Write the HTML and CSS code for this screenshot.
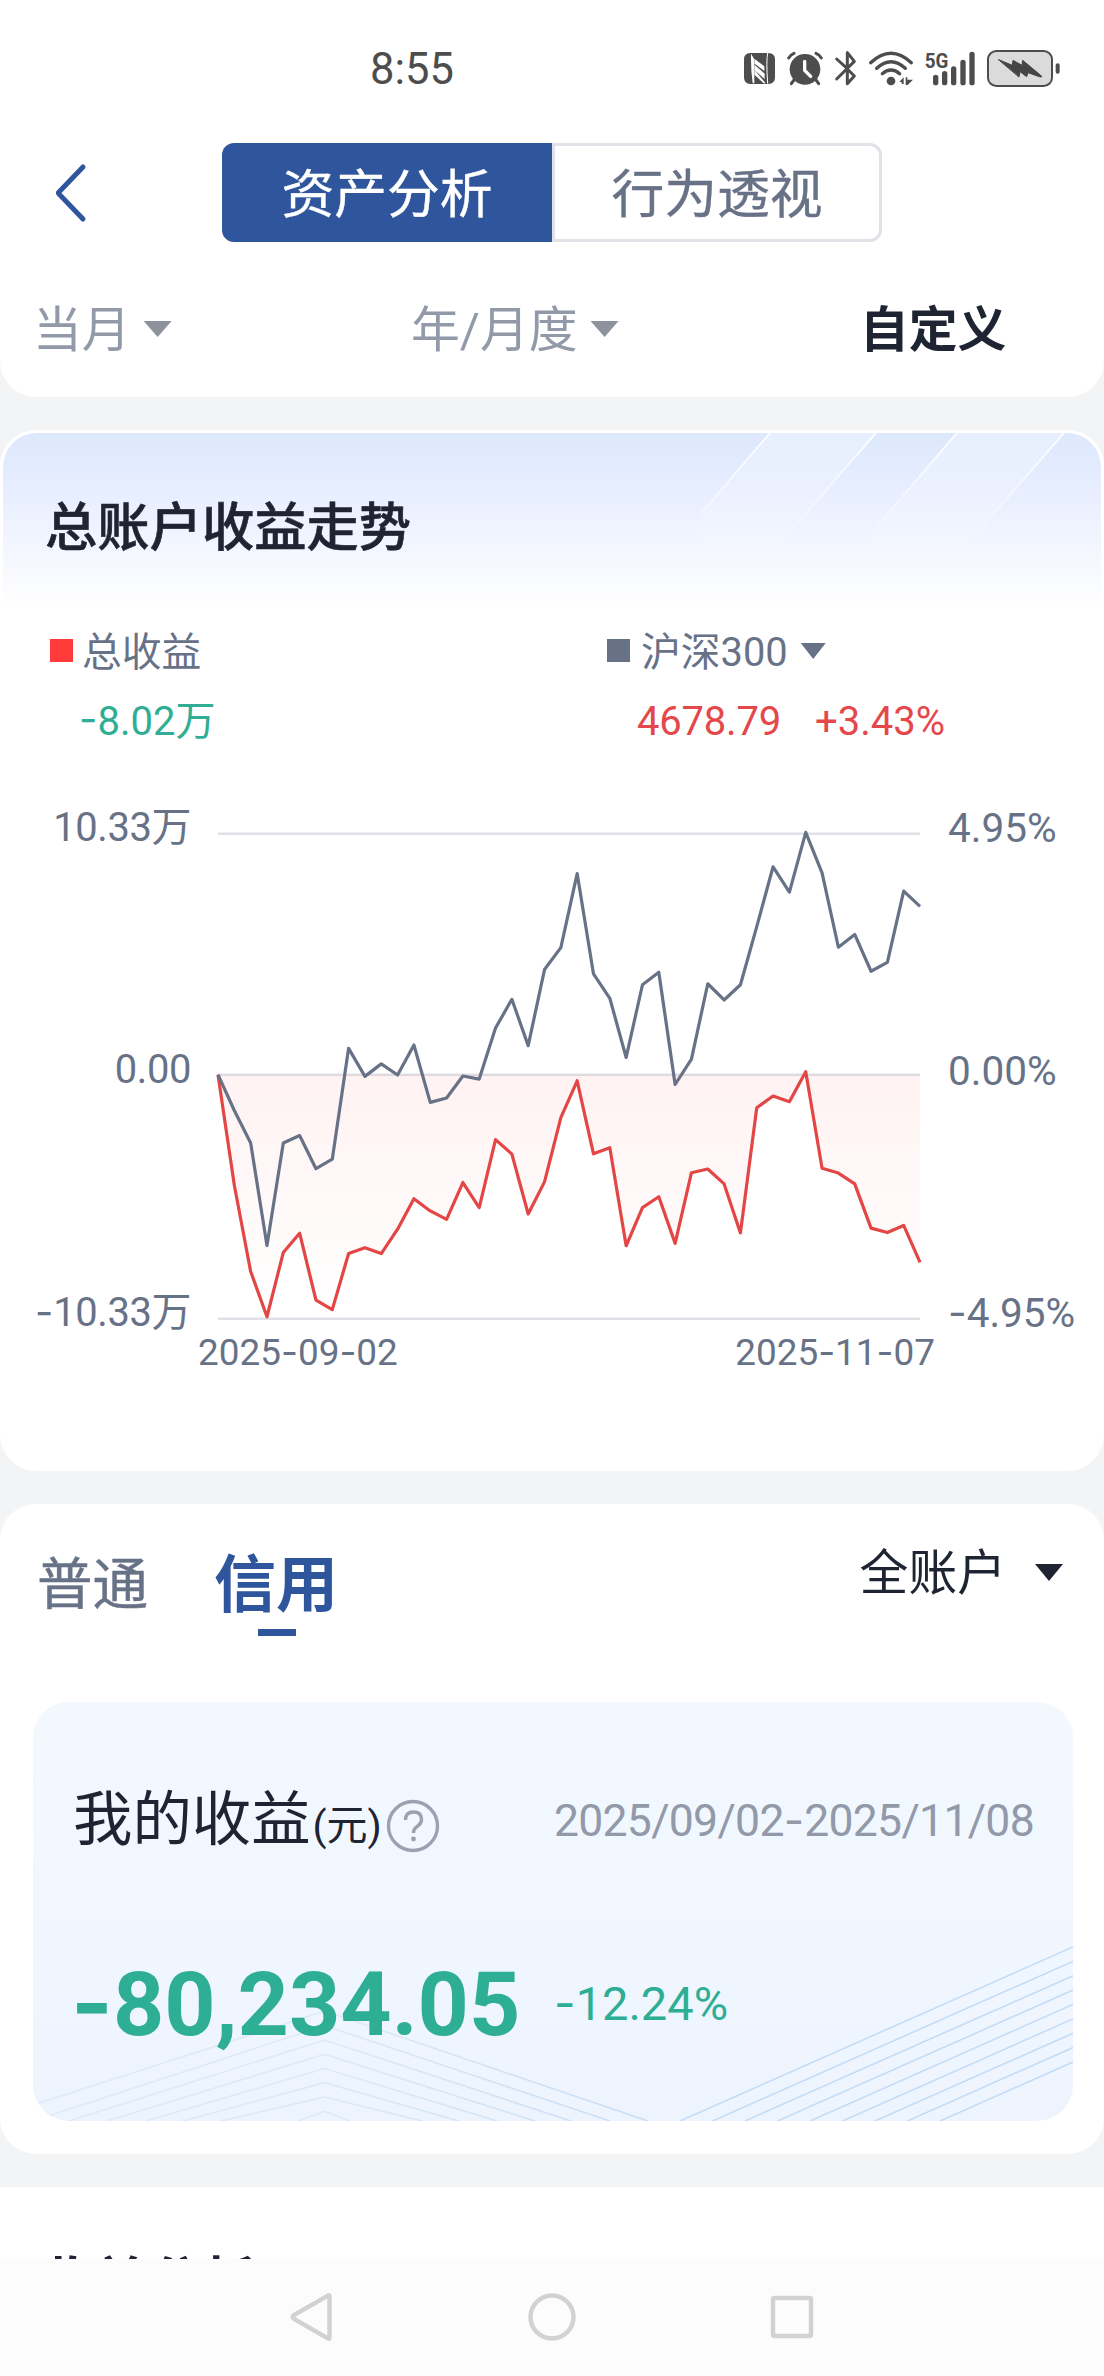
FILE: index.html
```
<!DOCTYPE html>
<html lang="zh-CN">
<head>
<meta charset="utf-8">
<title>资产分析</title>
<link rel="stylesheet" href="styles.css">
</head>
<body>
<div class="screen">
  <header class="header">
    <div class="status">
      <span class="clock">8:55</span>
      <svg class="status-icons" viewBox="0 0 1152 225" fill="none" stroke="#4d4d4d" stroke-linecap="round" stroke-linejoin="round">
        <!-- nfc -->
        <path d="M91 66h54q20 0 20 20v53q0 20-20 20H91q-19 0-19-20V86q0-20 19-20z" fill="#4d4d4d" stroke="none"/>
        <path d="M143 67q-5 20 0 90" stroke="#fff" stroke-width="3"/>
        <path d="M93 68l10 17v72h-5q-6-40-5-89zM104 84l29 22v14l-29-22zM104 102l30 26v16l-30-26zM104 118l33 39h-6l-27-25z" fill="#fff" stroke="none"/>
        <!-- alarm -->
        <circle cx="255" cy="115" r="46" fill="#4d4d4d" stroke="none"/>
        <path d="M206 81q6-10 16-14M288 67q10 4 16 14M222 147l-8 11M288 147l8 11" stroke-width="9"/>
        <path d="M254 91v27l18 18" stroke="#fff" stroke-width="10"/>
        <!-- bluetooth -->
        <path d="M350 84l28 25M350 144l53-53-21-26v43M382 124v34l21-23-18-18" stroke-width="9"/>
        <!-- wifi -->
        <path d="M452 95q61-57 122 0M470 112q43-40 86 0M487 128q26-22 52 0" stroke-width="10"/>
        <circle cx="513" cy="150" r="13" fill="#4d4d4d" stroke="none"/>
        <path d="M538 153l13-14v20h-6v-6zM557 139h5v7h17l-16 16h-6z" fill="#4d4d4d" stroke="none"/>
        <!-- signal -->
        <text x="614" y="110" class="net" textLength="71" lengthAdjust="spacingAndGlyphs">5G</text>
        <path d="M647 139v16M674 128v27M701 114v41M729 94v61M756 70v85" stroke-width="16"/>
        <!-- battery -->
        <rect x="804" y="60" width="192" height="105" rx="25" fill="#dbdbdb" stroke-width="6"/>
        <path d="M836 86l41 17 2-15 27 15 2-15 54 45q8 7-4 4l-34-12-4 12-20-15-3 15z" fill="#444" stroke="#444" stroke-width="3"/>
        <rect x="1007" y="97" width="12" height="31" rx="6" fill="#4d4d4d" stroke="none"/>
      </svg>
    </div>
    <div class="topbar">
      <svg class="back" viewBox="0 0 34 60" fill="none" stroke="#2f569d" stroke-width="5" stroke-linecap="round" stroke-linejoin="round"><path d="M29 4L5 29q-1 1 0 2L29 56"/></svg>
      <div class="segments">
        <span class="segment segment-on">资产分析</span>
        <span class="segment segment-off">行为透视</span>
      </div>
    </div>
    <nav class="filters">
      <span class="filter filter-month">当月<i class="caret"></i></span>
      <span class="filter filter-year">年/月度<i class="caret"></i></span>
      <span class="filter filter-custom">自定义</span>
    </nav>
  </header>

  <section class="card trend">
    <div class="trend-head">
      <svg class="stripes" viewBox="0 0 400 172">
        <defs>
          <linearGradient id="band" x1="0" y1="0" x2="0" y2="1"><stop offset="0" stop-color="#fff" stop-opacity=".3"/><stop offset="1" stop-color="#fff" stop-opacity="0"/></linearGradient>
          <linearGradient id="edge" gradientUnits="userSpaceOnUse" x1="0" y1="0" x2="0" y2="120"><stop offset="0" stop-color="#fff"/><stop offset="1" stop-color="#fff" stop-opacity="0"/></linearGradient>
        </defs>
        <path d="M69 0H175L55 138H-51zM256 0H363L243 138H136z" fill="url(#band)"/>
        <path d="M69 0L-10 92M175 0L75 115M256 0L177 92M363 0L263 115" stroke="url(#edge)" stroke-width="1.8"/>
      </svg>
      <h2 class="trend-title">总账户收益走势</h2>
    </div>
    <div class="legend">
      <div class="legend-col">
        <div class="legend-name"><i class="swatch swatch-red"></i><span class="legend-text">总收益</span></div>
        <div class="legend-value down"><b class="dash">-</b>8.02万</div>
      </div>
      <div class="legend-col legend-index">
        <div class="legend-name"><i class="swatch swatch-slate"></i><span class="legend-text">沪深300</span><i class="caret caret-slate"></i></div>
        <div class="legend-value up"><span class="index-price">4678.79</span><span class="index-change">+3.43%</span></div>
      </div>
    </div>
    <div class="chart">
      <div class="axis axis-left"><span>10.33万</span><span>0.00</span><span><b class="dash">-</b>10.33万</span></div>
      <svg class="plot" viewBox="0 0 702 530" fill="none">
        <defs>
          <linearGradient id="loss" gradientUnits="userSpaceOnUse" x1="0" y1="783" x2="0" y2="1500"><stop offset="0" stop-color="#ff3b3b" stop-opacity=".065"/><stop offset="1" stop-color="#ff3b3b" stop-opacity="0"/></linearGradient>
        </defs>
        <path d="M0 23.7H702M0 264.7H702M0 508.8H702" stroke="#e0e1e6" stroke-width="2.4"/>
        <g transform="scale(16.326 .33805)" stroke-width="3.2" stroke-linejoin="round">
          <path fill="url(#loss)" d="M0 783L1 1110 2 1365 3 1499 4 1309 5 1252 6 1450 7 1478 8 1312 9 1295 10 1312 11 1240 12 1150 13 1186 14 1211 15 1102 16 1176 17 975 18 1018 19 1195 20 1100 21 910 22 801 23 1017 24 999 25 1289 26 1176 27 1144 28 1282 29 1073 30 1062 31 1106 32 1251 33 881 34 846 35 863 36 774 37 1060 38 1074 39 1106 40 1237 41 1250 42 1229 43 1338V783z"/>
          <polyline class="line line-red" points="0,783 1,1110 2,1365 3,1499 4,1309 5,1252 6,1450 7,1478 8,1312 9,1295 10,1312 11,1240 12,1150 13,1186 14,1211 15,1102 16,1176 17,975 18,1018 19,1195 20,1100 21,910 22,801 23,1017 24,999 25,1289 26,1176 27,1144 28,1282 29,1073 30,1062 31,1106 32,1251 33,881 34,846 35,863 36,774 37,1060 38,1074 39,1106 40,1237 41,1250 42,1229 43,1338"/>
          <polyline class="line line-slate" points="0,783 1,889 2,985 3,1288 4,985 5,963 6,1061 7,1033 8,705 9,788 10,751 11,784 12,695 13,865 14,852 15,787 16,796 17,645 18,560 19,697 20,472 21,407 22,188 23,485 24,557 25,732 26,517 27,480 28,812 29,737 30,514 31,562 32,517 33,345 34,168 35,243 36,66 37,186 38,406 39,368 40,477 41,451 42,240 43,285"/>
        </g>
      </svg>
      <div class="axis axis-right"><span>4.95%</span><span>0.00%</span><span><b class="dash">-</b>4.95%</span></div>
    </div>
    <div class="dates"><span>2025<b class="dash">-</b>09<b class="dash">-</b>02</span><span>2025<b class="dash">-</b>11<b class="dash">-</b>07</span></div>
  </section>

  <section class="card account">
    <div class="tabs">
      <span class="tab">普通</span>
      <span class="tab tab-on">信用</span>
      <span class="scope">全账户<i class="caret caret-dark"></i></span>
    </div>
    <div class="profit">
      <svg class="profit-lines" viewBox="33 1702 1040 419" fill="none" stroke-width="1.6">
        <defs>
          <linearGradient id="ridge" gradientUnits="userSpaceOnUse" x1="33" y1="0" x2="648" y2="0"><stop offset="0" stop-color="#dfe9f8"/><stop offset=".5" stop-color="#dce9f7"/><stop offset="1" stop-color="#c9def4"/></linearGradient>
        </defs>
        <g stroke="#c5dcf5">
          <path d="M680 2121L1073 1947M712.500 2121L1073 1961.400M745 2121L1073 1975.800M777.500 2121L1073 1990.100M810 2121L1073 2004.500M842.500 2121L1073 2018.900M875 2121L1073 2033.300M907.500 2121L1073 2047.600M940 2121L1073 2062"/>
        </g>
        <g stroke="url(#ridge)">
          <path d="M33 2105L324.600 2011 648 2121M33 2121L324.600 2025.700 610 2121M69 2121L324.600 2040 571 2121M107 2121L324.600 2054.300 535 2121M146 2121L324.600 2068.500 497 2121M183 2121L324.600 2082.700 459 2121M221 2121L324.600 2097 422 2121M298 2121L324.600 2111.300 350 2121"/>
        </g>
      </svg>
      <div class="profit-head">
        <span class="profit-name">我的收益</span><span class="profit-unit">(元)</span>
        <svg class="help" viewBox="0 0 54 54" fill="none" stroke="#9ba1b1" stroke-width="3.4"><circle cx="27" cy="27" r="24.500"/><path d="M19.500 21q0-8 8-8t8 7.500q0 4-4 6.700-4 2.500-4 6.800"/><circle cx="27.500" cy="40" r="2.400" fill="#9ba1b1" stroke="none"/></svg>
        <span class="profit-range">2025/09/02<b class="dash">-</b>2025/11/08</span>
      </div>
      <div class="profit-body">
        <span class="profit-amount"><b class="dash">-</b>80,234.05</span>
        <span class="profit-rate"><b class="dash">-</b>12.24%</span>
      </div>
    </div>
  </section>

  <section class="analysis"><h2 class="analysis-title">收益分析</h2></section>

  <footer class="navbar">
    <svg viewBox="0 0 48 52"><path d="M41.500 5.500v41q0 2-1.600.8L6 28q-2.500-2 0-4L39.900 4.700q1.600-1.200 1.600.8z"/></svg>
    <svg viewBox="0 0 48 52"><circle cx="24" cy="26" r="21.500"/></svg>
    <svg viewBox="0 0 48 52"><rect x="5" y="7" width="38" height="38" rx="1.500"/></svg>
  </footer>
</div>
</body>
</html>
```
FILE: styles.css
```
* { box-sizing: border-box; }
body { margin: 0; background: #f3f4f6; }
.screen {
  width: 1104px; height: 2376px; overflow: hidden;
  display: flex; flex-direction: column;
  font-family: Roboto, "Noto Sans CJK SC", sans-serif;
  color: #1f2433; white-space: nowrap;
}
h2 { margin: 0; }
.dash { font-family: Inter, sans-serif; font-weight: inherit; letter-spacing: 0; }

.header { height: 397px; background: #fff; border-radius: 0 0 36px 36px; flex: none; }
.status { height: 136px; display: flex; align-items: center; justify-content: space-between; padding-left: 370px; }
.clock { font-size: 43.500px; color: #4d4d4d; padding-top: 2px; }
.status-icons { width: 384px; height: 75px; }
.net { font: 700 62px Roboto, sans-serif; fill: #4d4d4d; stroke: none; }
.topbar { height: 113px; display: flex; align-items: center; padding-left: 54px; }
.back { width: 34px; height: 60px; margin-right: 134px; }
.segments { display: flex; width: 660px; height: 99px; font-size: 52.800px; }
.segment { flex: none; width: 330px; display: flex; align-items: center; justify-content: center; padding-bottom: 5px; -webkit-text-stroke: .4px; }
.segment-on { background: #2f569d; color: #fff; border-radius: 12px 0 0 12px; }
.segment-off { color: #687287; border: 3px solid #e0e2e7; border-radius: 0 12px 12px 0; }
.filters { height: 148px; padding: 5px 0 0 33px; display: grid; grid-template-columns: 378px 449px auto; align-items: center; font-size: 48.800px; color: #9299a8; }
.filter { display: flex; align-items: center; }
.filter-custom { color: #1f2433; font-weight: 700; }
.caret { width: 28px; height: 16px; margin: 7px 0 0 13px; background: #8e929d; clip-path: polygon(0 0, 100% 0, 50% 100%); }

.card { background: #fff; border-radius: 36px; margin-top: 33px; flex: none; }
.trend { height: 1041px; padding: 3px; }
.trend-head {
  position: relative; height: 179px; padding: 57px 0 0 42px; border-radius: 34px 34px 0 0; overflow: hidden;
  background: linear-gradient(#dde8fd 0, #e6edff 28%, #fff 98%);
}
.stripes { position: absolute; right: 0; top: 0; width: 400px; height: 172px; }
.trend-title { position: relative; font-size: 52.300px; line-height: 76px; font-weight: 500; -webkit-text-stroke: .6px; }
.legend { display: grid; grid-template-columns: 557px auto; padding-left: 47px; }
.legend-name { display: flex; align-items: center; height: 72px; padding-top: 4px; font-size: 39.800px; color: #687287; }
.legend-text { margin-top: -4px; }
.swatch { width: 23px; height: 23px; margin-right: 9px; }
.swatch-red { background: #ff3a3a; }
.swatch-slate { background: #687287; margin-right: 11px; }
.caret-slate { width: 25px; background: #687287; margin-top: 2px; }
.legend-value { height: 68px; display: flex; align-items: center; font-size: 40px; padding-left: 29px; }
.legend-index .legend-value { padding: 7px 0 0 30px; }
.index-price { width: 178px; letter-spacing: -.2px; }
.down { color: #2fae95; }
.up { color: #e5484a; }
.chart { display: grid; grid-template-columns: 187px 702px 1fr; column-gap: 28px; height: 534px; margin-top: 51px; font-size: 40.500px; color: #687287; }
.axis { display: flex; flex-direction: column; justify-content: space-between; height: 534px; line-height: 48px; padding-top: 1px; }
.axis-left { text-align: right; font-size: 39.900px; letter-spacing: -.4px; margin-right: -1px; }
.plot { width: 702px; height: 530px; margin-top: 7px; overflow: visible; }
.line { vector-effect: non-scaling-stroke; }
.line-red { stroke: #e34645; }
.line-slate { stroke: #687287; }
.dates { display: flex; justify-content: space-between; margin: -7px 166px 0 195px; font-size: 36.900px; line-height: 44px; color: #687287; }

.account { height: 650px; }
.tabs { height: 198px; padding-left: 37px; display: flex; }
.tab { font-size: 55.500px; line-height: 80px; padding-top: 42px; color: #687287; -webkit-text-stroke: .5px; }
.tab-on { position: relative; margin-left: 66px; font-size: 62px; font-weight: 700; color: #2f569d; -webkit-text-stroke: 0; }
.tab-on::after { content: ""; position: absolute; left: 44px; top: 125px; width: 38px; height: 7px; background: #2f569d; }
.scope { margin: 28px 41px 0 auto; height: 72px; display: flex; align-items: center; font-size: 48.800px; }
.caret-dark { background: #1f2433; margin: 9px 0 0 29px; height: 17px; }
.profit { position: relative; width: 1040px; height: 419px; margin-left: 33px; border-radius: 36px; overflow: hidden; background: linear-gradient(#f3f8ff, #f0f7ff 50%, #edf4fe); }
.profit-lines { position: absolute; inset: 0; width: 1040px; height: 419px; }
.profit-head { position: relative; display: flex; align-items: baseline; padding: 75px 39px 0 40px; height: 180px; line-height: 86px; }
.profit-name { font-size: 59.400px; }
.profit-unit { font-size: 41px; margin-left: 2px; }
.help { width: 54px; height: 54px; margin-left: 4px; align-self: flex-start; margin-top: 22px; }
.profit-range { margin: 0 0 0 auto; align-self: flex-start; font-size: 44.500px; letter-spacing: -.7px; color: #9299a8; }
.profit-body { position: relative; display: flex; align-items: center; height: 240px; padding-left: 38px; color: #2dae95; }
.profit-amount { width: 483px; font-size: 89.500px; font-weight: 700; }
.profit-rate { font-size: 47px; }

.analysis { margin-top: 33px; height: 72px; flex: none; background: #fff; padding: 56px 0 0 38px; overflow: hidden; }
.analysis-title { font-size: 55px; line-height: 80px; font-weight: 700; }
.navbar { height: 117px; flex: none; background: #fcfcfc; display: flex; justify-content: center; gap: 192px; padding-top: 32px; }
.navbar svg { width: 48px; height: 52px; fill: none; stroke: #d2d2d2; stroke-width: 4.500px; }
```
